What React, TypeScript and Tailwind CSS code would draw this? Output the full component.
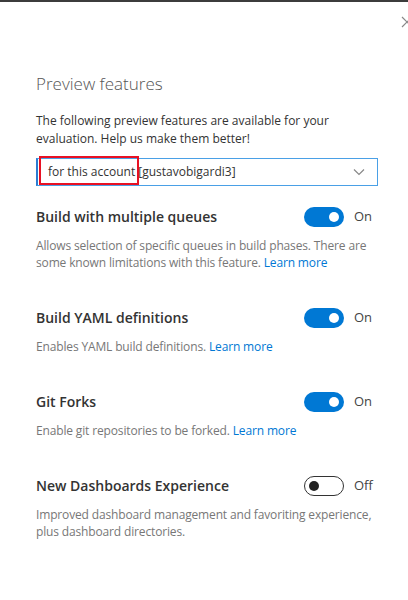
import React from 'react';

interface Feature {
  title: string;
  desc: string;
  link?: boolean;
  on: boolean;
}

const features: Feature[] = [
  {
    title: 'Build with multiple queues',
    desc: 'Allows selection of specific queues in build phases. There are some known limitations with this feature.',
    link: true,
    on: true,
  },
  { title: 'Build YAML definitions', desc: 'Enables YAML build definitions.', link: true, on: true },
  { title: 'Git Forks', desc: 'Enable git repositories to be forked.', link: true, on: true },
  {
    title: 'New Dashboards Experience',
    desc: 'Improved dashboard management and favoriting experience, plus dashboard directories.',
    on: false,
  },
];

const Toggle: React.FC<{ on: boolean }> = ({ on }) => (
  <div className="flex items-center gap-[10px]">
    {on ? (
      <div className="flex h-[20px] w-[40px] items-center justify-end rounded-full bg-[#0078d4] pr-[5px]">
        <div className="h-[10px] w-[10px] rounded-full bg-white" />
      </div>
    ) : (
      <div className="flex h-[20px] w-[40px] items-center rounded-full border border-[#333] bg-white pl-[4px]">
        <div className="h-[10px] w-[10px] rounded-full bg-[#222]" />
      </div>
    )}
    <span className="w-[16px] text-[13px] text-[#444]">{on ? 'On' : 'Off'}</span>
  </div>
);

const App: React.FC = () => {
  return (
    <div
      className="relative h-[600px] w-[408px] overflow-hidden border-t-2 border-[#3c3c3c] bg-white"
      style={{ fontFamily: '"Open Sans", "Noto Sans", sans-serif' }}
    >
      <svg className="absolute left-[401px] top-[14px] h-[12px] w-[12px]" viewBox="0 0 12 12">
        <path d="M1 1 L11 11 M11 1 L1 11" stroke="#888" strokeWidth="1.2" fill="none" />
      </svg>

      <div className="pl-[36px] pr-[30px] pt-[70px]">
        <h1 className="text-[17px] font-light leading-[24px] text-[#555]">Preview features</h1>
        <p className="mt-[16px] pr-[40px] text-[12px] leading-[18px] text-[#333]">
          The following preview features are available for your evaluation. Help us make them better!
        </p>

        <div className="relative mt-[10px] flex h-[28px] items-center justify-between border border-l-2 border-[#4aa0e6] border-l-[#2b7cd3] pl-[10px] pr-[12px]">
          <span className="text-[12px] text-[#333]">for this account [gustavobigardi3]</span>
          <svg className="h-[8px] w-[12px]" viewBox="0 0 12 8">
            <path d="M1 1.5 L6 6.5 L11 1.5" stroke="#888" strokeWidth="1.2" fill="none" />
          </svg>
          <div className="absolute left-[1px] top-[-3px] h-[29px] w-[100px] border-2 border-[#e81123]" />
        </div>

        <div className="mt-[20px] flex flex-col gap-[36px]">
          {features.map((f) => (
            <div key={f.title}>
              <div className="flex items-center justify-between pr-[8px]">
                <h2 className="text-[14px] font-semibold text-[#333]">{f.title}</h2>
                <Toggle on={f.on} />
              </div>
              <p className="mt-[10px] text-[12px] leading-[17px] tracking-[-0.15px] text-[#777]">
                {f.desc}
                {f.link && (
                  <>
                    {' '}
                    <a href="#" className="text-[#0078d4]">
                      Learn more
                    </a>
                  </>
                )}
              </p>
            </div>
          ))}
        </div>
      </div>
    </div>
  );
};

export default App;
